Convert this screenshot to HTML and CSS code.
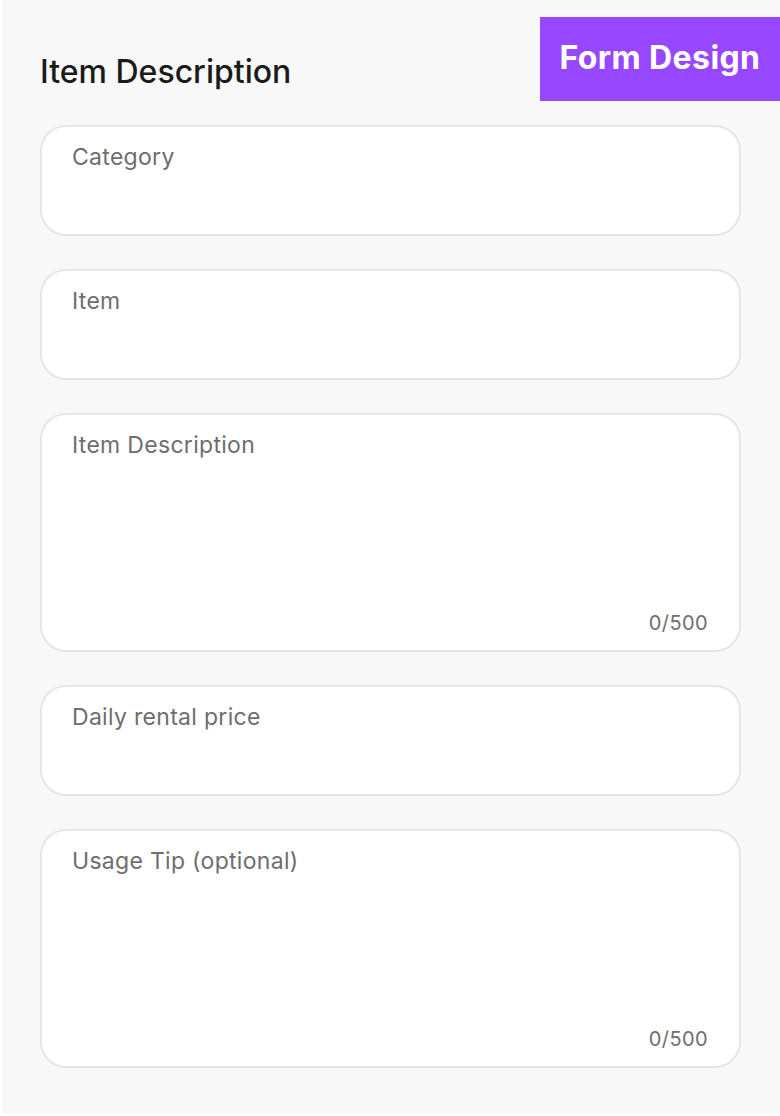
FILE: index.html
```html
<!DOCTYPE html>
<html lang="en">
<head>
    <meta charset="UTF-8">
    <meta name="viewport" content="width=device-width, initial-scale=1.0">
    <title>Form Design</title>
    <link rel="stylesheet" href="styles.css">
</head>
<body>
    <div class="page">
        <div class="badge">Form Design</div>

        <h1 class="title">Item Description</h1>

        <form class="form">
            <div class="field">
                <label for="category">Category</label>
                <input type="text" id="category">
            </div>

            <div class="field">
                <label for="item">Item</label>
                <input type="text" id="item">
            </div>

            <div class="field field-area">
                <label for="desc">Item Description</label>
                <textarea id="desc" maxlength="500"></textarea>
                <span class="counter">0/500</span>
            </div>

            <div class="field">
                <label for="price">Daily rental price</label>
                <input type="text" id="price">
            </div>

            <div class="field field-area">
                <label for="tip">Usage Tip (optional)</label>
                <textarea id="tip" maxlength="500"></textarea>
                <span class="counter">0/500</span>
            </div>
        </form>
    </div>
</body>
</html>
```

FILE: styles.css
```css
body {
    margin: 0;
    background: #ffffff;
    font-family: Inter, "Open Sans", sans-serif;
}

.page {
    position: relative;
    margin-left: 2px;
    height: 1114px;
    background: #f8f8f8;
    padding: 53px 39px 0 38px;
    box-sizing: border-box;
}

.badge {
    position: absolute;
    top: 17px;
    right: 0;
    width: 240px;
    height: 84px;
    background: #9747ff;
    color: #ffffff;
    font-size: 32px;
    font-weight: 700;
    letter-spacing: 0.4px;
    display: flex;
    align-items: center;
    justify-content: center;
    padding-bottom: 4px;
    box-sizing: border-box;
}

.title {
    margin: 0 0 34px;
    font-size: 32px;
    font-weight: 500;
    line-height: 38px;
    letter-spacing: 0;
    color: #1b1b1b;
}

.form {
    display: flex;
    flex-direction: column;
    gap: 33px;
}

.field {
    display: flex;
    flex-direction: column;
    height: 111px;
    padding: 16px 31px 0 30px;
    box-sizing: border-box;
    background: #ffffff;
    border: 2px solid #e6e6e6;
    border-radius: 26px;
}

.field label {
    font-size: 23px;
    line-height: 28px;
    color: #6e6e6e;
    letter-spacing: 0.3px;
}

.field input,
.field textarea {
    border: none;
    outline: none;
    background: transparent;
    font: inherit;
    padding: 0;
    resize: none;
}

.field-area {
    height: 239px;
    padding-bottom: 15px;
}

.field-area textarea {
    flex: 1;
}

.counter {
    align-self: flex-end;
    font-size: 20px;
    line-height: 24px;
    color: #6e6e6e;
    letter-spacing: 0.4px;
}
```
